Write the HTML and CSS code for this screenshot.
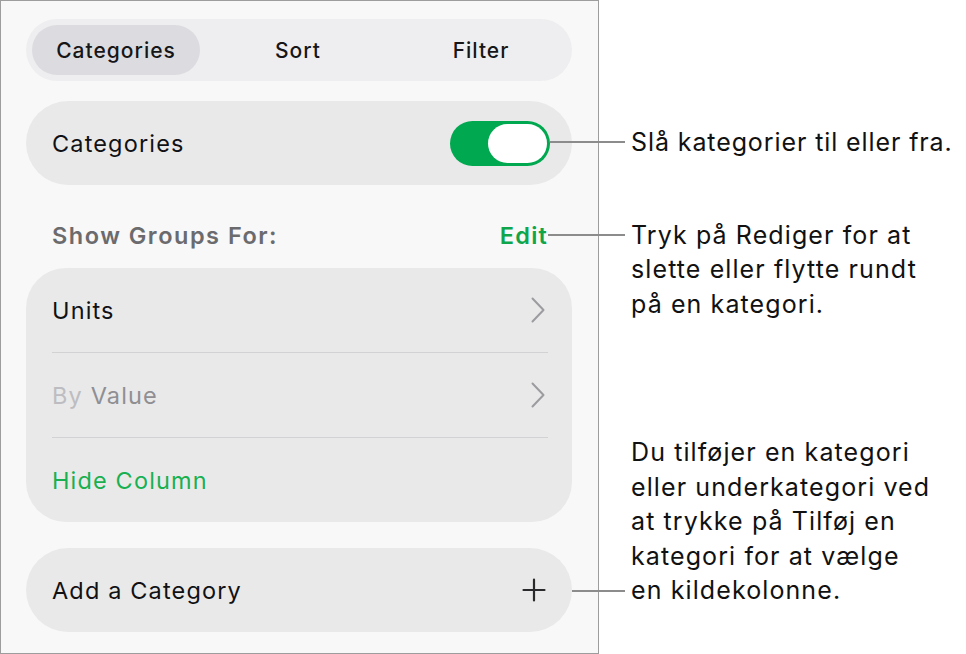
FILE: index.html
```html
<!DOCTYPE html>
<html lang="da">
<head>
<meta charset="utf-8">
<title>Categories</title>
<link rel="stylesheet" href="styles.css">
</head>
<body>
<div class="page">
  <aside class="panel">
    <div class="segmented">
      <span class="seg seg-1 active">Categories</span>
      <span class="seg seg-2">Sort</span>
      <span class="seg seg-3">Filter</span>
    </div>

    <div class="card row toggle-row">
      <span class="label">Categories</span>
      <span class="switch"><span class="knob"></span></span>
    </div>

    <div class="section-head">
      <span class="section-title">Show Groups For:</span>
      <span class="edit">Edit</span>
    </div>

    <div class="card group">
      <div class="row">
        <span class="label">Units</span>
        <svg class="chev" width="14" height="26" viewBox="0 0 14 26"><path d="M1.5 1.5 L12.5 13 L1.5 24.5" fill="none" stroke="#9c9ca0" stroke-width="2" stroke-linecap="round" stroke-linejoin="round"/></svg>
      </div>
      <div class="divider"></div>
      <div class="row">
        <span class="label muted"><span class="by">By</span> Value</span>
        <svg class="chev" width="14" height="26" viewBox="0 0 14 26"><path d="M1.5 1.5 L12.5 13 L1.5 24.5" fill="none" stroke="#9c9ca0" stroke-width="2" stroke-linecap="round" stroke-linejoin="round"/></svg>
      </div>
      <div class="divider"></div>
      <div class="row">
        <span class="label green">Hide Column</span>
      </div>
    </div>

    <div class="card row add-row">
      <span class="label">Add a Category</span>
      <svg class="plus" width="24" height="24" viewBox="0 0 24 24"><path d="M12 1.5 V22.5 M1.5 12 H22.5" fill="none" stroke="#2a2a2c" stroke-width="2.2" stroke-linecap="round"/></svg>
    </div>
  </aside>

  <div class="notes">
    <p class="note note-1">Slå kategorier til eller fra.</p>
    <p class="note note-2">Tryk på Rediger for at<br>slette eller flytte rundt<br>på en kategori.</p>
    <p class="note note-3">Du tilføjer en kategori<br>eller underkategori ved<br>at trykke på Tilføj en<br>kategori for at vælge<br>en kildekolonne.</p>
  </div>
</div>
</body>
</html>
```

FILE: styles.css
```css
* { box-sizing: border-box; }

html, body {
  margin: 0;
  padding: 0;
  background: #ffffff;
}

body {
  font-family: Inter, "Noto Sans", "Liberation Sans", sans-serif;
  color: #1c1c1e;
  width: 966px;
  height: 654px;
  overflow: hidden;
}

.page {
  display: flex;
  height: 654px;
}

.panel {
  width: 599px;
  height: 654px;
  flex: none;
  background: #f8f8f8;
  border: 1px solid #9d9d9d;
  padding: 18px 26px 0 25px;
  display: flex;
  flex-direction: column;
}

/* segmented control */
.segmented {
  height: 62px;
  border-radius: 31px;
  background: #eeeef0;
  padding: 6px;
  display: flex;
}

.seg {
  display: flex;
  align-items: center;
  justify-content: center;
  height: 50px;
  border-radius: 25px;
  font-size: 21px;
  font-weight: 500;
  letter-spacing: 1px;
  color: #161618;
}

.seg-1 { width: 168px; }
.seg-2 { width: 196px; }
.seg-3 { flex: 1; }

.seg.active {
  background: #dcdce0;
}

/* cards */
.card {
  background: #e9e9ea;
  border-radius: 42px;
}

.row {
  height: 84px;
  display: flex;
  align-items: center;
  justify-content: space-between;
  padding: 0 27px 0 26px;
}

.toggle-row {
  margin-top: 20px;
  padding-right: 22px;
}

.label {
  font-size: 23.5px;
  letter-spacing: 1.15px;
  color: #111113;
}

.switch {
  width: 100px;
  height: 45px;
  border-radius: 23px;
  background: #00a84f;
  padding: 3px;
  display: flex;
  justify-content: flex-end;
}

.knob {
  width: 59px;
  height: 39px;
  border-radius: 20px;
  background: #ffffff;
}

.section-head {
  display: flex;
  justify-content: space-between;
  align-items: center;
  padding: 34px 24px 16px 26px;
  line-height: 33px;
  font-size: 23.5px;
  font-weight: 600;
  letter-spacing: 1.5px;
}

.section-title { color: #6b6b6e; }
.edit { color: #0fa54a; letter-spacing: 1.2px; }

.group {
  border-radius: 40px;
}

.divider {
  height: 1px;
  margin: 0 24px 0 26px;
  background: #d2d2d4;
}

.muted { color: #8f8f93; }
.by { color: #bdbdc1; }
.green { color: #19b052; }

.add-row {
  margin-top: 26px;
}

.chev { display: block; }
.plus { display: block; margin-right: -1px; }

/* annotations */
.notes {
  padding: 125px 0 0 32px;
  display: flex;
  flex-direction: column;
}

.note {
  position: relative;
  margin: 0;
  font-size: 25px;
  line-height: 34.5px;
  letter-spacing: 1.1px;
  color: #111111;
  white-space: nowrap;
}

.note-1 { letter-spacing: 0.9px; }

.note::before {
  content: "";
  position: absolute;
  height: 2px;
  background: #8c8c8c;
}

.note-1::before { right: calc(100% + 6px); top: 16px; width: 75px; }

.note-2 { margin-top: 58px; }
.note-2::before { right: calc(100% + 6px); top: 16px; width: 77px; }

.note-3 { margin-top: 114px; }
.note-3::before { right: calc(100% + 6px); bottom: 16px; width: 53px; }
```
